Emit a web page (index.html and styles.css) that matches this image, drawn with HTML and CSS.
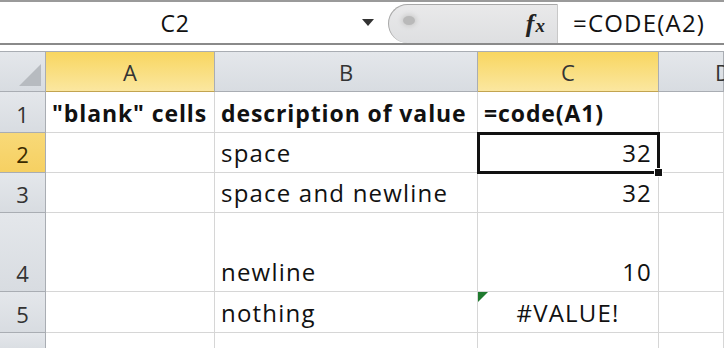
FILE: index.html
```html
<!DOCTYPE html>
<html lang="en">
<head>
  <meta charset="UTF-8">
  <meta name="viewport" content="width=device-width, initial-scale=1.0">
  <title>CODE function</title>
  <link rel="stylesheet" href="styles.css">
</head>
<body>

  <div class="formula-bar">
    <div class="name-box">
      <span class="name">C2</span>
      <span class="arrow"></span>
    </div>
    <div class="pill">
      <span class="knob"></span>
      <span class="fx"><i>f</i><i class="x">x</i></span>
    </div>
    <div class="formula">=CODE(A2)</div>
  </div>

  <div class="sheet">
    <div class="hd corner"><span class="tri"></span></div>
    <div class="hd col sel">A</div>
    <div class="hd col">B</div>
    <div class="hd col sel">C</div>
    <div class="hd col last">D</div>

    <div class="hd row">1</div>
    <div class="cell b">"blank" cells</div>
    <div class="cell b">description of value</div>
    <div class="cell b">=code(A1)</div>
    <div class="cell"></div>

    <div class="hd row sel">2</div>
    <div class="cell"></div>
    <div class="cell">space</div>
    <div class="cell num active">32<span class="handle"></span></div>
    <div class="cell"></div>

    <div class="hd row">3</div>
    <div class="cell"></div>
    <div class="cell">space and newline</div>
    <div class="cell num">32</div>
    <div class="cell"></div>

    <div class="hd row">4</div>
    <div class="cell"></div>
    <div class="cell">newline</div>
    <div class="cell num">10</div>
    <div class="cell"></div>

    <div class="hd row">5</div>
    <div class="cell"></div>
    <div class="cell">nothing</div>
    <div class="cell err"><span class="flag"></span>#VALUE!</div>
    <div class="cell"></div>

    <div class="hd row cut">6</div>
    <div class="cell"></div>
    <div class="cell"></div>
    <div class="cell"></div>
    <div class="cell"></div>
  </div>

</body>
</html>
```

FILE: styles.css
```css
* {
  margin: 0;
  padding: 0;
  box-sizing: border-box;
}

body {
  width: 724px;
  height: 348px;
  overflow: hidden;
  background-color: #fff;
  font-family: "Open Sans", Lato, sans-serif;
  color: #111;
}

/* formula bar */
.formula-bar {
  display: flex;
  height: 45px;
  border-top: 2px solid #9a9a9a;
  border-bottom: 2px solid #8a8a8a;
}

.name-box {
  width: 388px;
  display: flex;
  align-items: center;
}

.name {
  width: 350px;
  text-align: center;
  font-size: 23px;
  letter-spacing: 0.6px;
}

.arrow {
  width: 0;
  height: 0;
  border-left: 6px solid transparent;
  border-right: 6px solid transparent;
  border-top: 7px solid #333;
  margin-left: 12px;
}

.pill {
  width: 170px;
  margin: 2px 0 0;
  background: linear-gradient(#e9e9ea, #dedfe1);
  border: 1px solid #a8a8a8;
  border-right: 1px solid #c8c8c8;
  border-bottom: none;
  border-radius: 22px 0 0 22px;
  display: flex;
  align-items: center;
  justify-content: space-between;
  padding: 0 12px 0 14px;
}

.knob {
  width: 12px;
  height: 9px;
  border-radius: 50%;
  background: #b9b9b9;
  box-shadow: 0 0 4px 2px #cfcfcf;
  margin-bottom: 8px;
}

.fx {
  font-family: "Liberation Serif", serif;
  font-size: 26px;
  font-weight: bold;
  color: #222;
}

.fx .x {
  font-size: 19px;
  margin-left: 1px;
}

.formula {
  flex: 1;
  padding-left: 15px;
  display: flex;
  align-items: center;
  font-size: 24px;
  letter-spacing: 1.2px;
}

/* grid */
.sheet {
  margin-top: 6px;
  border-top: 1px solid #a9adb3;
  display: grid;
  grid-template-columns: 46px 169px 263px 181px 65px;
  grid-template-rows: 40px 41px 40px 40px 79px 41px 20px;
}

.hd {
  background: linear-gradient(#e4e7eb, #d8dce1);
  border-right: 1px solid #a9adb3;
  border-bottom: 1px solid #a9adb3;
  color: #333;
  font-size: 22px;
  display: flex;
  align-items: center;
  justify-content: center;
}

.col.sel {
  background: linear-gradient(#f8d660, #fbe7a0);
  border-bottom-color: #c2a450;
}

.row.sel {
  background: linear-gradient(#f8d978, #f6d062);
  color: #3a2b00;
}

.row {
  align-items: flex-end;
  padding-bottom: 3px;
}

.row.cut {
  align-items: flex-start;
  padding-top: 8px;
}

.col.last {
  justify-content: flex-start;
  padding-left: 56px;
}

.corner {
  position: relative;
}

.tri {
  position: absolute;
  right: 4px;
  bottom: 5px;
  width: 0;
  height: 0;
  border-left: 22px solid transparent;
  border-bottom: 22px solid #b7bbc0;
}

.cell {
  border-right: 1px solid #d6d6d6;
  border-bottom: 1px solid #d6d6d6;
  font-size: 24px;
  letter-spacing: 1.2px;
  display: flex;
  align-items: flex-end;
  padding: 0 6px 3px;
  white-space: nowrap;
  position: relative;
}

.cell.b {
  font-weight: bold;
  font-size: 23px;
  letter-spacing: 0.9px;
}

.num {
  justify-content: flex-end;
}

.err {
  justify-content: center;
}

.active {
  outline: 3px solid #111;
  outline-offset: -2px;
  z-index: 2;
}

.handle {
  position: absolute;
  right: -5px;
  bottom: -5px;
  width: 9px;
  height: 9px;
  background: #111;
  border: 1px solid #fff;
}

.flag {
  position: absolute;
  left: 0;
  top: 0;
  width: 0;
  height: 0;
  border-top: 10px solid #1f7a2e;
  border-right: 10px solid transparent;
}
```
